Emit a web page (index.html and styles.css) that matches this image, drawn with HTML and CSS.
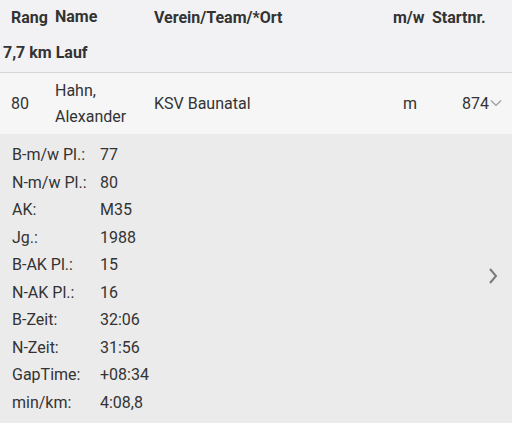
FILE: index.html
```html
<!DOCTYPE html>
<html>
<head>
<meta charset="utf-8">
<link rel="stylesheet" href="styles.css">
</head>
<body>
<div class="page">
  <div class="head">
    <div class="cols hdr">
      <span class="c-rang">Rang</span>
      <span class="c-name">Name</span>
      <span class="c-verein">Verein/Team/*Ort</span>
      <span class="c-mw">m/w</span>
      <span class="c-nr">Startnr.</span>
    </div>
    <div class="section">7,7 km Lauf</div>
  </div>
  <div class="cols row">
    <span class="c-rang">80</span>
    <span class="c-name">Hahn,<br>Alexander</span>
    <span class="c-verein">KSV Baunatal</span>
    <span class="c-mw mw-val">m</span>
    <span class="c-nr nr-val">874<svg class="chev-down" width="12" height="8" viewBox="0 0 12 8"><path d="M1 1.5 L6 6.5 L11 1.5" fill="none" stroke="#9a9a9a" stroke-width="1.2"/></svg></span>
  </div>
  <div class="details">
    <dl class="list">
      <dt>B-m/w Pl.:</dt><dd>77</dd>
      <dt>N-m/w Pl.:</dt><dd>80</dd>
      <dt>AK:</dt><dd>M35</dd>
      <dt>Jg.:</dt><dd>1988</dd>
      <dt>B-AK Pl.:</dt><dd>15</dd>
      <dt>N-AK Pl.:</dt><dd>16</dd>
      <dt>B-Zeit:</dt><dd>32:06</dd>
      <dt>N-Zeit:</dt><dd>31:56</dd>
      <dt>GapTime:</dt><dd>+08:34</dd>
      <dt>min/km:</dt><dd>4:08,8</dd>
    </dl>
    <svg class="chev-right" width="10" height="18" viewBox="0 0 10 18"><path d="M2 2 L8 9 L2 16" fill="none" stroke="#7a7a7a" stroke-width="2"/></svg>
  </div>
</div>
</body>
</html>
```
FILE: styles.css
```css
* { box-sizing: border-box; }
html, body { margin: 0; padding: 0; }
body {
  font-family: Roboto, "Noto Sans", sans-serif;
  color: #333;
  font-size: 16px;
  background: #ebebeb;
  width: 512px;
  height: 423px;
  overflow: hidden;
}
.head {
  background: #f2f2f4;
  border-bottom: 1px solid #d6d6d8;
}
.cols {
  display: grid;
  grid-template-columns: 44px 99px 239px 39px 1fr;
  padding-left: 11px;
  align-items: center;
}
.hdr {
  height: 34px;
  font-weight: 700;
  font-size: 16px;
}
.section {
  height: 38px;
  line-height: 38px;
  padding-left: 3px;
  font-weight: 700;
  font-size: 16px;
}
.row {
  height: 61px;
  background: #f6f6f7;
  font-size: 16px;
}
.c-name { line-height: 26px; }
.mw-val { padding-left: 10px; }
.nr-val { padding-left: 30px; display: flex; align-items: center; }
.chev-down { margin-left: 1px; margin-top: -2px; }
.details {
  display: flex;
  align-items: center;
  justify-content: space-between;
  padding: 7px 14px 0 12px;
}
.list {
  margin: 0;
  display: grid;
  grid-template-columns: 88px auto;
  grid-auto-rows: 27.5px;
  align-items: center;
}
.list dt, .list dd { margin: 0; }
.chev-right { margin-top: -6px; }
```
